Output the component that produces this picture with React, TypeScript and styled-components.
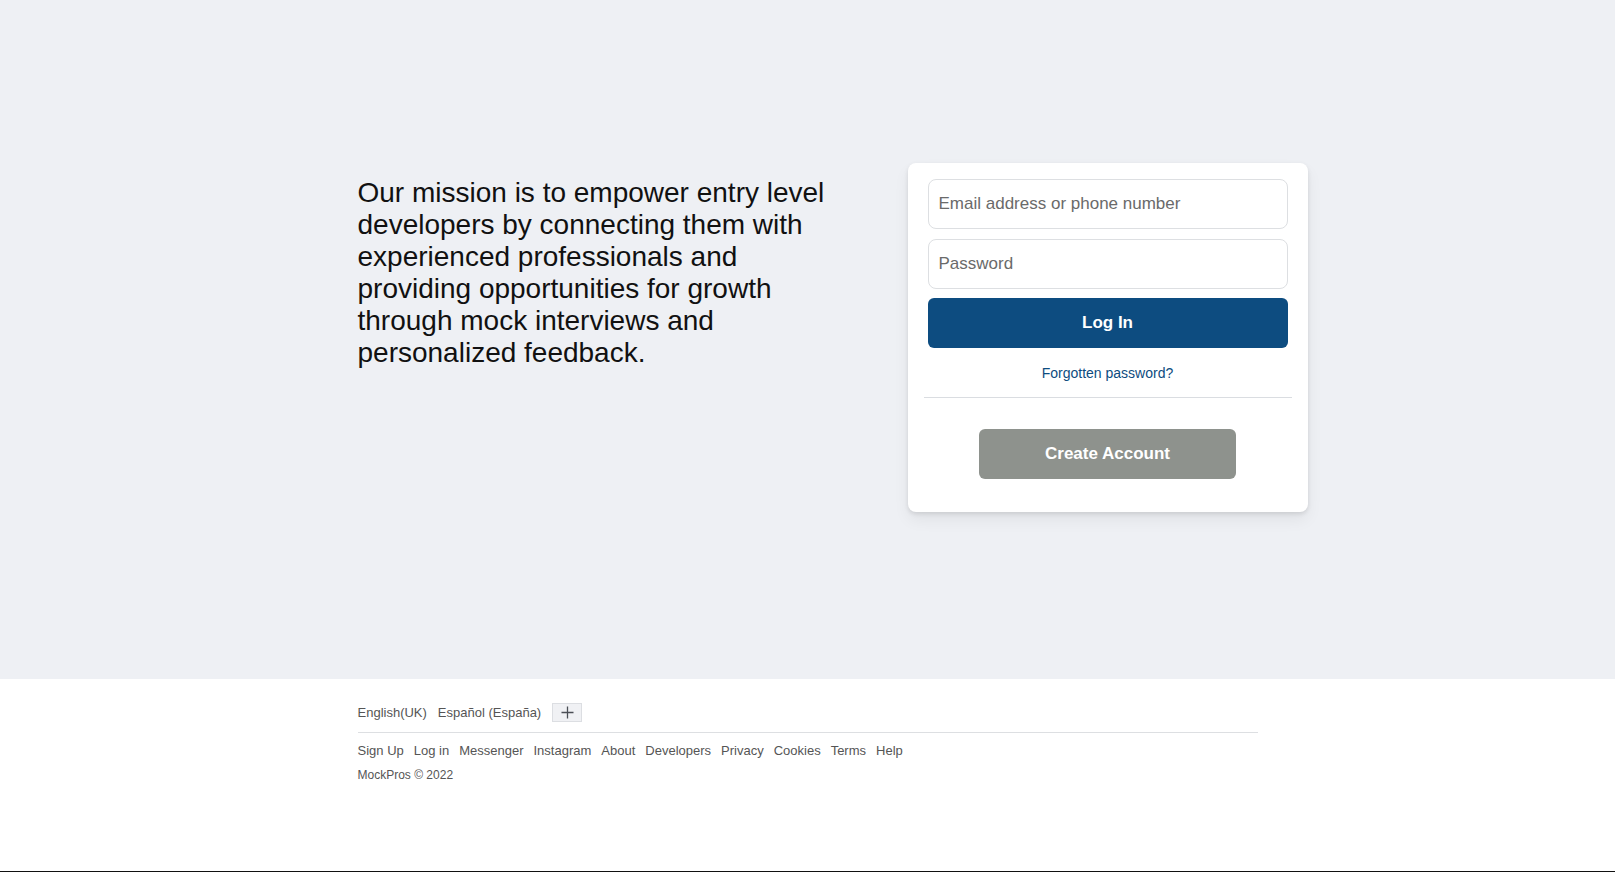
import React from 'react';
import styled, { createGlobalStyle } from 'styled-components';

const GlobalStyle = createGlobalStyle`
  html, body {
    margin: 0;
    padding: 0;
    background: #ffffff;
    font-family: 'Liberation Sans', Arial, Helvetica, sans-serif;
  }
  * {
    box-sizing: border-box;
  }
`;

const StyledHero = styled.section`
  height: 679px;
  padding-top: 163px;
  background-color: #eef0f4;
`;

const StyledRow = styled.div`
  display: flex;
  align-items: flex-start;
  width: 900px;
  margin: 0 auto;
`;

const StyledMission = styled.div`
  flex: 0 0 550px;
  padding-top: 14px;
`;

const StyledMissionText = styled.p`
  width: 480px;
  margin: 0;
  font-size: 28px;
  line-height: 32px;
  color: #111111;
`;

const StyledCard = styled.div`
  flex-shrink: 0;
  width: 400px;
  padding: 16px 16px 33px;
  background-color: #ffffff;
  border-radius: 8px;
  box-shadow: 0 2px 4px rgba(0, 0, 0, 0.1), 0 8px 16px rgba(0, 0, 0, 0.06);
`;

const StyledForm = styled.form`
  display: flex;
  flex-direction: column;
  gap: 10px;
  padding: 0 4px;
`;

const StyledInput = styled.input`
  height: 50px;
  padding: 0 10px;
  border: 1px solid #dddfe2;
  border-radius: 8px;
  font-family: inherit;
  font-size: 17px;
  color: #1c1e21;
  outline: none;

  &::placeholder {
    color: #6a6a6a;
  }
`;

interface ButtonProps {
  $secondary?: boolean;
}

const StyledButton = styled.button<ButtonProps>`
  display: block;
  height: 50px;
  width: ${(props) => (props.$secondary ? '257px' : '100%')};
  margin: ${(props) => (props.$secondary ? '31px auto 0' : '-1px 0 0')};
  border: none;
  border-radius: 6px;
  background-color: ${(props) => (props.$secondary ? '#8e928d' : '#0d4c80')};
  color: #ffffff;
  font-family: inherit;
  font-size: 17px;
  font-weight: bold;
  cursor: pointer;
`;

const StyledForgot = styled.a`
  display: block;
  margin-top: 16px;
  font-size: 14px;
  line-height: 18px;
  text-align: center;
  color: #0d4c80;
  text-decoration: none;
`;

const StyledDivider = styled.hr`
  height: 1px;
  margin: 15px 0 0;
  border: none;
  background-color: #dadde1;
`;

const StyledFooter = styled.footer`
  height: 193px;
  padding-top: 24px;
  background-color: #ffffff;
  border-bottom: 1px solid #111111;
`;

const StyledFooterInner = styled.div`
  width: 900px;
  margin: 0 auto;
`;

const StyledLangRow = styled.div`
  display: flex;
  align-items: center;
  gap: 11px;
  height: 19px;
`;

const StyledLang = styled.span`
  font-size: 13px;
  color: #555555;
`;

const StyledPlus = styled.button`
  display: flex;
  align-items: center;
  justify-content: center;
  width: 30px;
  height: 19px;
  padding: 0;
  border: 1px solid #dcdee2;
  background-color: #f0f1f4;
  cursor: pointer;
`;

const StyledFooterLine = styled.div`
  height: 1px;
  margin-top: 10px;
  background-color: #dddfe2;
`;

const StyledLinks = styled.div`
  display: flex;
  gap: 10px;
  margin-top: 10px;
`;

const StyledLink = styled.a`
  font-size: 13px;
  line-height: 16px;
  color: #555555;
  text-decoration: none;
`;

const StyledCopyright = styled.div`
  margin-top: 8px;
  font-size: 12px;
  line-height: 16px;
  color: #555555;
`;

export default function App() {
  const links = ['Sign Up', 'Log in', 'Messenger', 'Instagram', 'About', 'Developers', 'Privacy', 'Cookies', 'Terms', 'Help'];
  return (
    <>
      <GlobalStyle />
      <StyledHero>
        <StyledRow>
          <StyledMission>
            <StyledMissionText>
              Our mission is to empower entry level developers by connecting them with experienced professionals and
              providing opportunities for growth through mock interviews and personalized feedback.
            </StyledMissionText>
          </StyledMission>
          <StyledCard>
            <StyledForm onSubmit={(e) => e.preventDefault()}>
              <StyledInput type="text" placeholder="Email address or phone number" />
              <StyledInput type="password" placeholder="Password" />
              <StyledButton type="submit">Log In</StyledButton>
            </StyledForm>
            <StyledForgot href="#">Forgotten password?</StyledForgot>
            <StyledDivider />
            <StyledButton $secondary>Create Account</StyledButton>
          </StyledCard>
        </StyledRow>
      </StyledHero>
      <StyledFooter>
        <StyledFooterInner>
          <StyledLangRow>
            <StyledLang>English(UK)</StyledLang>
            <StyledLang>Español (España)</StyledLang>
            <StyledPlus aria-label="More languages">
              <svg width="13" height="13" viewBox="0 0 13 13">
                <path d="M6.5 0.5v12M0.5 6.5h12" stroke="#4b4f56" strokeWidth="1.3" fill="none" />
              </svg>
            </StyledPlus>
          </StyledLangRow>
          <StyledFooterLine />
          <StyledLinks>
            {links.map((link) => (
              <StyledLink key={link} href="#">
                {link}
              </StyledLink>
            ))}
          </StyledLinks>
          <StyledCopyright>MockPros © 2022</StyledCopyright>
        </StyledFooterInner>
      </StyledFooter>
    </>
  );
}
